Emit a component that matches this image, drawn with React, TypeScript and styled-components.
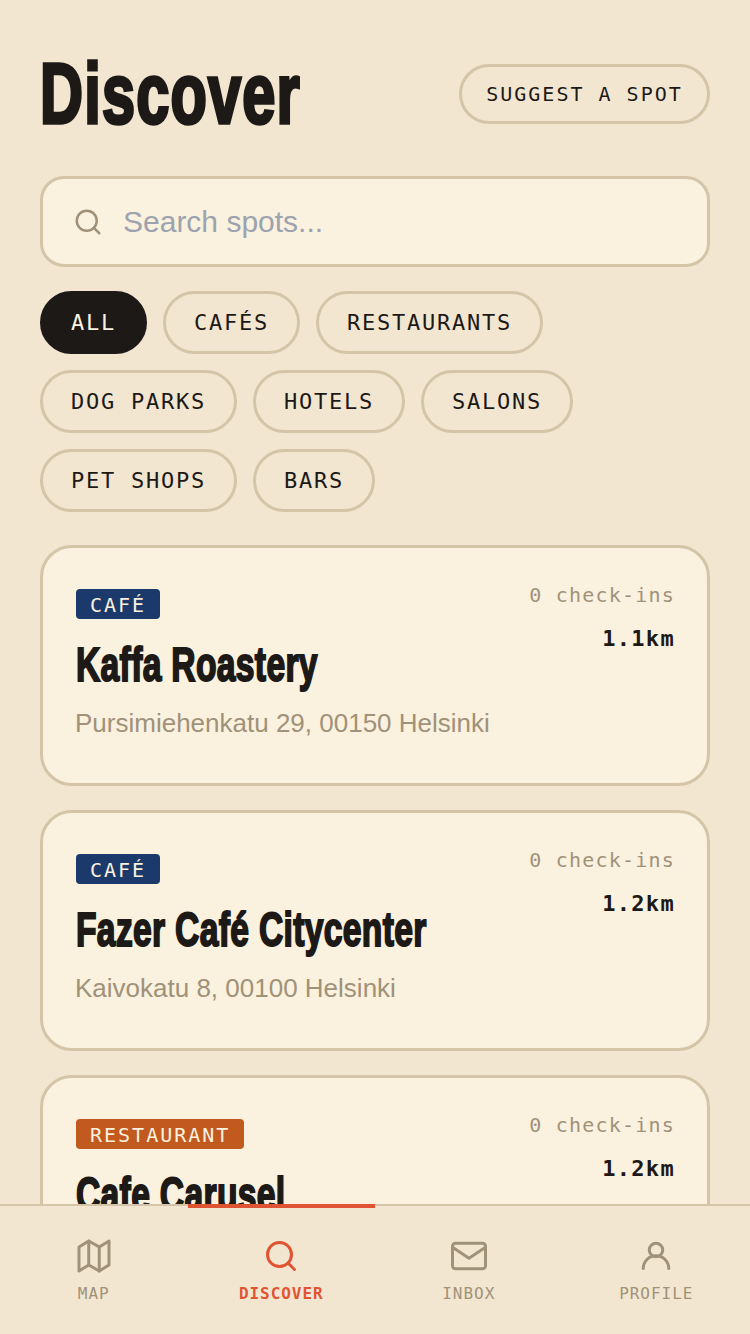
import React from 'react'
import styled, { createGlobalStyle } from 'styled-components'

const sans = '"Liberation Sans", Arial, sans-serif'
const mono = '"DejaVu Sans Mono", monospace'
const ink = '#1c1917'
const line = '#d4c5a9'
const muted = '#a09279'
const accent = '#e05434'
const paper = '#faf1df'

const GlobalStyle = createGlobalStyle`
  html, body {
    margin: 0;
    padding: 0;
    height: 1334px;
    overflow: hidden;
    background: #f2e6d0;
    font-family: ${sans};
  }
  * { box-sizing: border-box; }
`

const Page = styled.div`
  padding: 40px 40px 0;
  height: 1334px;
  overflow: hidden;
`

const Header = styled.header`
  display: flex;
  justify-content: space-between;
  align-items: center;
  height: 108px;
`

const Title = styled.h1`
  margin: 0;
  font-size: 85px;
  line-height: 108px;
  font-weight: 700;
  color: ${ink};
  -webkit-text-stroke: 3.5px ${ink};
  letter-spacing: 0.02em;
  transform: scaleX(0.7);
  transform-origin: left center;
`

const SuggestButton = styled.button`
  width: 251px;
  height: 60px;
  border: 3px solid ${line};
  border-radius: 30px;
  background: transparent;
  padding: 0;
  font-family: ${mono};
  font-size: 20px;
  letter-spacing: 0.1em;
  color: ${ink};
`

const SearchBox = styled.div`
  display: flex;
  align-items: center;
  gap: 18px;
  height: 91px;
  margin-top: 28px;
  padding: 0 30px;
  background: ${paper};
  border: 3px solid ${line};
  border-radius: 24px;
  color: ${muted};
`

const SearchInput = styled.input`
  flex: 1;
  border: 0;
  outline: 0;
  background: transparent;
  font-family: ${sans};
  font-size: 30px;
  color: ${ink};
  &::placeholder { color: #9ca3af; opacity: 1; }
`

const Chips = styled.div`
  display: flex;
  flex-wrap: wrap;
  gap: 16px;
  margin-top: 24px;
`

const Chip = styled.button<{ $active?: boolean }>`
  height: 63px;
  padding: 0 28px;
  border: 3px solid ${p => (p.$active ? ink : line)};
  border-radius: 32px;
  background: ${p => (p.$active ? ink : 'transparent')};
  color: ${p => (p.$active ? paper : ink)};
  font-family: ${mono};
  font-size: 22px;
  letter-spacing: 0.08em;
`

const List = styled.div`
  display: flex;
  flex-direction: column;
  gap: 24px;
  margin-top: 33px;
`

const Card = styled.article`
  display: flex;
  justify-content: space-between;
  height: 241px;
  flex-shrink: 0;
  padding: 33px 32px 0 33px;
  background: ${paper};
  border: 3px solid ${line};
  border-radius: 32px;
`

const CardBody = styled.div`
  flex: 1;
  min-width: 0;
`

const Badge = styled.span<{ $bg: string }>`
  display: inline-block;
  height: 30px;
  margin-top: 8px;
  padding: 0 14px;
  border-radius: 4px;
  background: ${p => p.$bg};
  color: ${paper};
  font-family: ${mono};
  font-size: 20px;
  line-height: 32px;
  letter-spacing: 0.1em;
`

const CardName = styled.h2`
  margin: 18px 0 0;
  height: 56px;
  font-size: 48px;
  line-height: 56px;
  font-weight: 700;
  color: ${ink};
  white-space: nowrap;
  letter-spacing: 0.01em;
  -webkit-text-stroke: 2px ${ink};
  transform: scaleX(0.7);
  transform-origin: left center;
`

const Address = styled.p`
  margin: 12px 0 0 -1px;
  font-size: 26px;
  line-height: 36px;
  color: ${muted};
  white-space: nowrap;
`

const Meta = styled.div`
  display: flex;
  flex-direction: column;
  align-items: flex-end;
  flex-shrink: 0;
  gap: 15px;
  font-family: ${mono};
  white-space: nowrap;
`

const CheckIns = styled.span`
  font-size: 20px;
  line-height: 28px;
  letter-spacing: 0.06em;
  color: ${muted};
`

const Distance = styled.span`
  font-size: 22px;
  line-height: 30px;
  font-weight: 700;
  letter-spacing: 0.06em;
  color: ${ink};
`

const TabBar = styled.nav`
  position: fixed;
  left: 0;
  right: 0;
  bottom: 0;
  display: grid;
  grid-template-columns: repeat(4, 1fr);
  height: 130px;
  background: #f2e6d0;
  border-top: 2px solid ${line};
`

const Tab = styled.div<{ $active?: boolean }>`
  position: relative;
  display: flex;
  flex-direction: column;
  align-items: center;
  padding-top: 32px;
  gap: 10px;
  color: ${p => (p.$active ? accent : muted)};
  &::before {
    content: '';
    display: ${p => (p.$active ? 'block' : 'none')};
    position: absolute;
    left: 0;
    right: 0;
    top: -2px;
    height: 4px;
    background: ${accent};
  }
`

const TabLabel = styled.span<{ $active?: boolean }>`
  font-family: ${mono};
  font-size: 16px;
  line-height: 20px;
  letter-spacing: 0.06em;
  font-weight: ${p => (p.$active ? 700 : 400)};
`

const Icon = styled.svg.attrs({
  viewBox: '0 0 24 24',
  fill: 'none',
  stroke: 'currentColor',
  strokeWidth: 2,
  strokeLinecap: 'round',
  strokeLinejoin: 'round',
})<{ $size?: number }>`
  display: block;
  width: ${p => p.$size || 36}px;
  height: ${p => p.$size || 36}px;
  flex-shrink: 0;
`

const SearchIcon = ({ size }: { size?: number }) => (
  <Icon $size={size}>
    <circle cx="11" cy="11" r="8" />
    <path d="m21 21-4.3-4.3" />
  </Icon>
)

const tabs = [
  { label: 'MAP', icon: <Icon><path d="M2 6l6.5-4 7 4L22 2v16l-6.5 4-7-4L2 22z" /><path d="M8.5 2v16M15.5 6v16" /></Icon> },
  { label: 'DISCOVER', active: true, icon: <SearchIcon /> },
  { label: 'INBOX', icon: <Icon><rect x="1" y="3.5" width="22" height="17" rx="2" /><path d="M1.5 6.5 12 13.5l10.5-7" /></Icon> },
  { label: 'PROFILE', icon: <Icon><circle cx="12" cy="8" r="4.5" /><path d="M3.5 20.3a8.5 8.5 0 0 1 17 0" /></Icon> },
]

const filters = ['ALL', 'CAFÉS', 'RESTAURANTS', 'DOG PARKS', 'HOTELS', 'SALONS', 'PET SHOPS', 'BARS']

const spots = [
  { type: 'CAFÉ', color: '#1b3a6b', name: 'Kaffa Roastery', address: 'Pursimiehenkatu 29, 00150 Helsinki', km: '1.1km' },
  { type: 'CAFÉ', color: '#1b3a6b', name: 'Fazer Café Citycenter', address: 'Kaivokatu 8, 00100 Helsinki', km: '1.2km' },
  { type: 'RESTAURANT', color: '#c25a1f', name: 'Cafe Carusel', address: 'Merisatamanranta 10, 00150 Helsinki', km: '1.2km' },
]

export default function App() {
  return (
    <Page>
      <GlobalStyle />
      <Header>
        <Title>Discover</Title>
        <SuggestButton>SUGGEST A SPOT</SuggestButton>
      </Header>
      <SearchBox>
        <SearchIcon size={30} />
        <SearchInput placeholder="Search spots..." />
      </SearchBox>
      <Chips>
        {filters.map((f, i) => (
          <Chip key={f} $active={i === 0}>{f}</Chip>
        ))}
      </Chips>
      <List>
        {spots.map(s => (
          <Card key={s.name}>
            <CardBody>
              <Badge $bg={s.color}>{s.type}</Badge>
              <CardName>{s.name}</CardName>
              <Address>{s.address}</Address>
            </CardBody>
            <Meta>
              <CheckIns>0 check-ins</CheckIns>
              <Distance>{s.km}</Distance>
            </Meta>
          </Card>
        ))}
      </List>
      <TabBar>
        {tabs.map(t => (
          <Tab key={t.label} $active={t.active}>
            {t.icon}
            <TabLabel $active={t.active}>{t.label}</TabLabel>
          </Tab>
        ))}
      </TabBar>
    </Page>
  )
}
